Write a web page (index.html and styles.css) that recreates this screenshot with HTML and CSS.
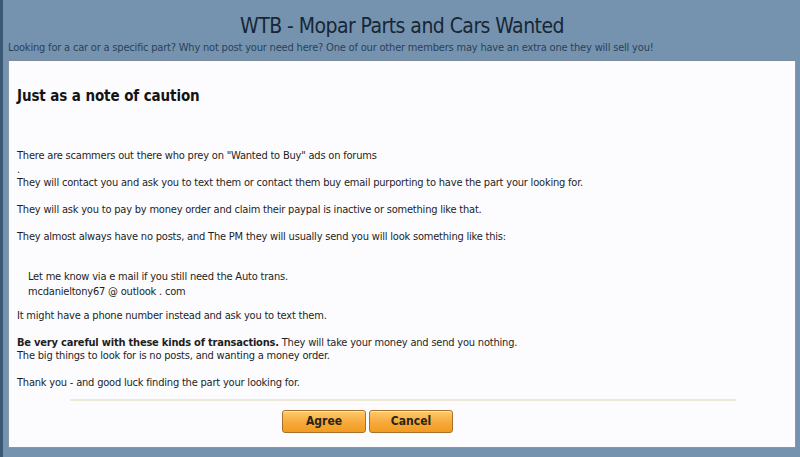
FILE: index.html
```html
<!DOCTYPE html>
<html>
<head>
<meta charset="utf-8">
<link rel="stylesheet" href="styles.css">
</head>
<body>
<div class="page">
  <div class="edge"></div>
  <div class="main">
    <h1 class="title">WTB - Mopar Parts and Cars Wanted</h1>
    <p class="desc">Looking for a car or a specific part? Why not post your need here? One of our other members may have an extra one they will sell you!</p>
    <div class="panel">
      <h2 class="notice-head">Just as a note of caution</h2>
      <div class="notice-body">
        There are scammers out there who prey on "Wanted to Buy" ads on forums<br>
        .<br>
        They will contact you and ask you to text them or contact them buy email purporting to have the part your looking for.<br>
        <br>
        They will ask you to pay by money order and claim their paypal is inactive or something like that.<br>
        <br>
        They almost always have no posts, and The PM they will usually send you will look something like this:<br>
        <div class="quote">Let me know via e mail if you still need the Auto trans.<br>mcdanieltony67 @ outlook . com</div>
        It might have a phone number instead and ask you to text them.<br>
        <br>
        <b>Be very careful with these kinds of transactions.</b> They will take your money and send you nothing.<br>
        The big things to look for is no posts, and wanting a money order.<br>
        <br>
        Thank you - and good luck finding the part your looking for.
      </div>
      <div class="sep"></div>
      <div class="actions">
        <button class="btn">Agree</button>
        <button class="btn">Cancel</button>
      </div>
    </div>
  </div>
</div>
</body>
</html>
```
FILE: styles.css
```css
html, body {
  margin: 0;
  padding: 0;
}
body {
  background: #7593ae;
  width: 800px;
  height: 457px;
  overflow: hidden;
  font-family: "DejaVu Sans Condensed", "DejaVu Sans", Verdana, sans-serif;
}
.page {
  display: flex;
  height: 457px;
}
.edge {
  width: 3px;
  background: #3b5875;
  flex: none;
}
.main {
  flex: 1;
  padding: 0 4px 0 5px;
}
.title {
  margin: 13px 0 0;
  text-align: center;
  font-weight: normal;
  font-size: 21px;
  line-height: 26px;
  letter-spacing: -0.55px;
  color: #172636;
}
.desc {
  margin: 2px 0 0;
  font-size: 11px;
  line-height: 14px;
  letter-spacing: -0.19px;
  color: #2b4159;
}
.panel {
  margin-top: 5px;
  background: #fcfcff;
  border: 1px solid #8796a8;
  border-top-color: #7e8b9a;
  height: 388px;
  box-sizing: border-box;
  padding: 0 8px;
}
.notice-head {
  margin: 24px 0 0;
  font-size: 15px;
  line-height: 22px;
  font-weight: bold;
  letter-spacing: -0.1px;
  color: #141414;
}
.notice-body {
  margin-top: 42px;
  font-size: 11px;
  line-height: 13.5px;
  letter-spacing: -0.2px;
  color: #1e1e1e;
}
.quote {
  margin: 25px 0 10px 11px;
  line-height: 15px;
}
.sep {
  margin: 9px 51px 0 53px;
  height: 2px;
  background: #ece9d6;
}
.actions {
  display: flex;
  gap: 3px;
  margin: 9px 0 0 265px;
}
.btn {
  width: 84px;
  height: 23px;
  border: 1px solid #a7712a;
  border-radius: 3px;
  background: linear-gradient(#fdca6c, #f7a93a 55%, #f29b20);
  box-shadow: inset 0 1px 0 rgba(255,255,255,0.5);
  font-family: "DejaVu Sans Condensed", "DejaVu Sans", sans-serif;
  font-weight: bold;
  font-size: 12px;
  color: #2a2418;
  padding: 0;
}
```
